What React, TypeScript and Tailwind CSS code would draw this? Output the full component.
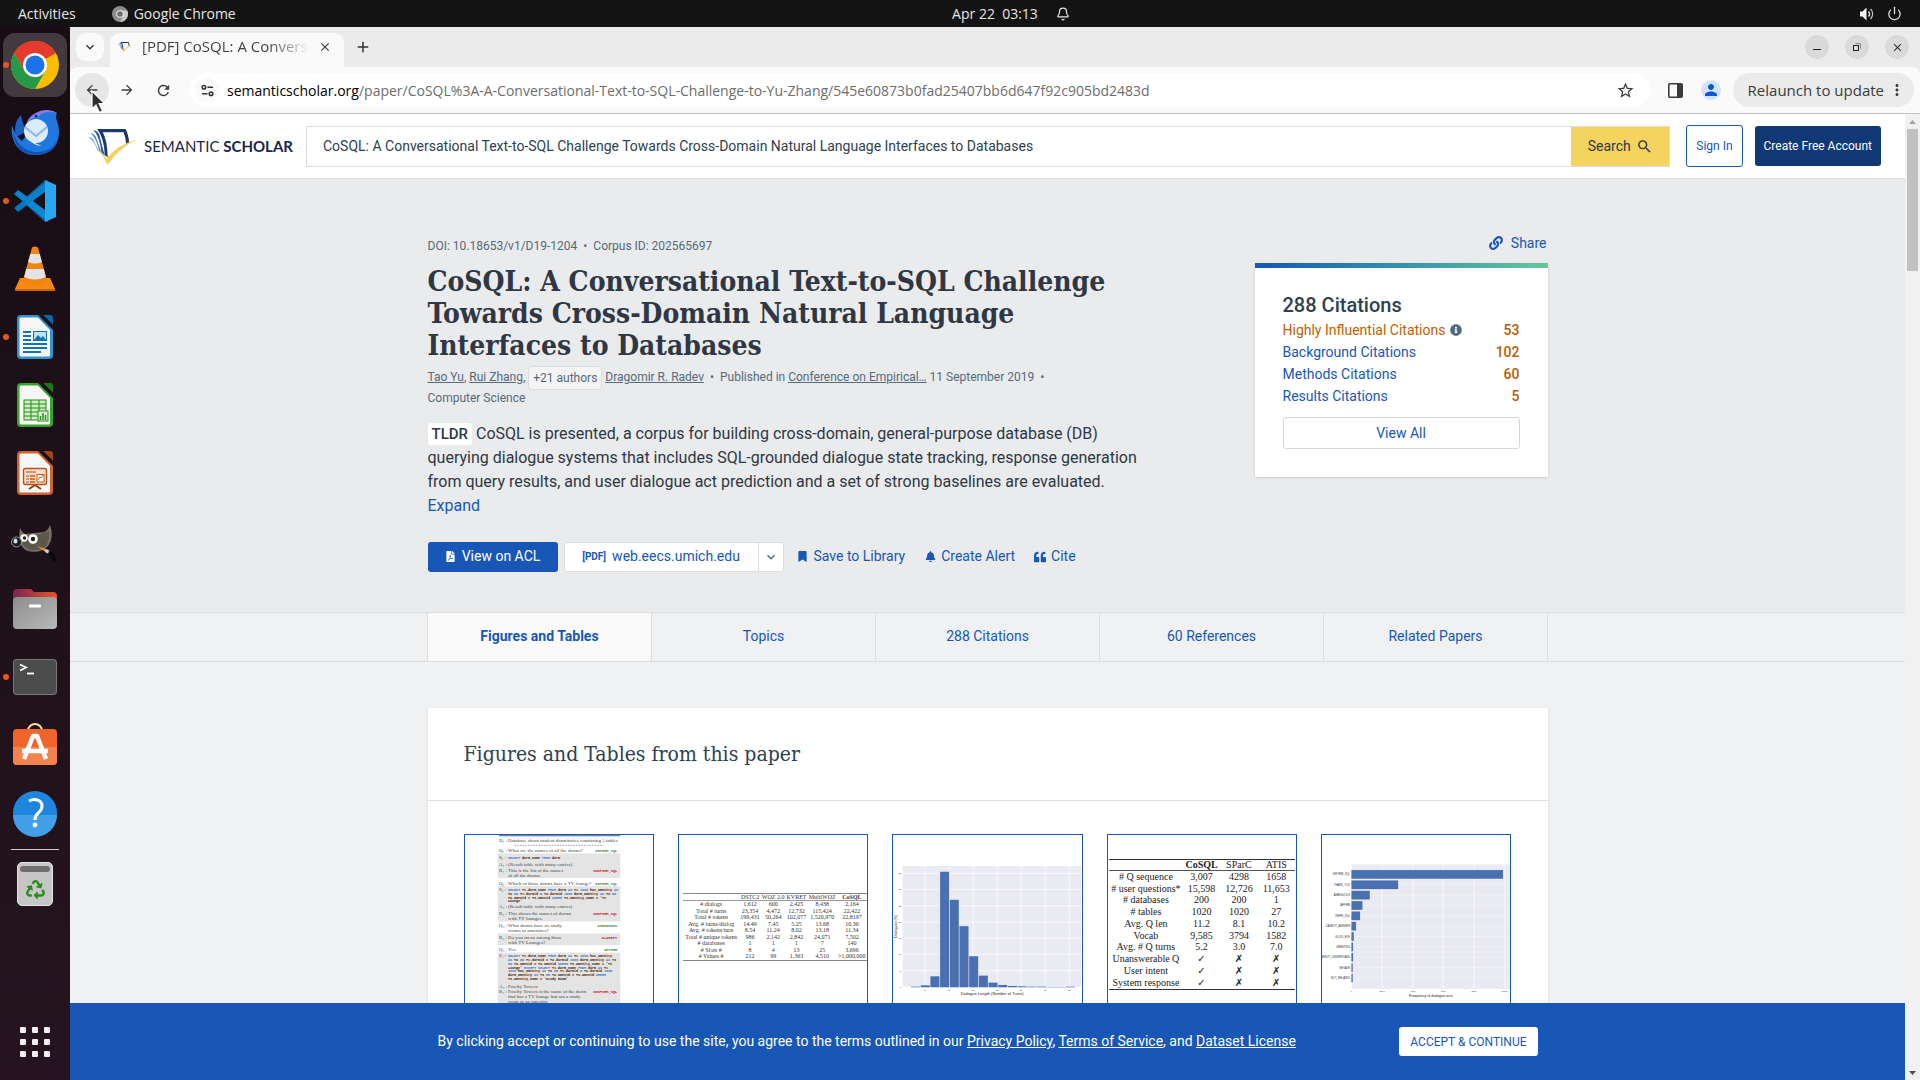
import React from "react";
import { FaBell, FaBookmark, FaFilePdf, FaInfoCircle, FaLink, FaQuoteLeft, FaRecycle } from "react-icons/fa";
import { MdArrowBack, MdArrowForward, MdClose, MdMoreVert, MdPerson, MdRefresh, MdSearch, MdStarBorder, MdAdd, MdExpandMore } from "react-icons/md";
import { Bell, Power } from "lucide-react";

const UI = "font-['Open_Sans','Noto_Sans',sans-serif]";
const ROBOTO = "font-['Roboto',sans-serif]";
const SLAB = "font-['DejaVu_Serif_Condensed','DejaVu_Serif',serif]";

/* ---------- desktop top bar ---------- */

function SpeakerIcon() {
  return (
    <svg viewBox="0 0 16 16" className="size-4" fill="none" stroke="#e8e8e8">
      <path d="M1 5.5h2.5L7.5 1.5v13L3.500 10.500H1z" fill="#f2f2f2" stroke="none" />
      <path d="M9.500 5.500a3.500 3.500 0 0 1 0 5" strokeWidth="1.400" />
      <path d="M11.500 3a7 7 0 0 1 0 10" strokeWidth="1.200" opacity="0.850" />
    </svg>
  );
}

function TopBar() {
  return (
    <header className={`${UI} grid h-[27px] shrink-0 grid-cols-3 items-center bg-[#131313] text-[14px] text-[#e6e6e6]`}>
      <div className="flex items-center gap-9 pl-[18px]">
        <button>Activities</button>
        <button className="flex items-center gap-[6px]">
          <svg viewBox="0 0 16 16" className="size-4">
            <circle cx="8" cy="8" r="8" fill="#8d8d8d" />
            <path d="M8 4.500h7.200A8 8 0 0 1 8 16l3.200-6z" fill="#c9c9c9" />
            <circle cx="8" cy="8" r="3.800" fill="#e9e9e9" />
            <circle cx="8" cy="8" r="2.800" fill="#6d6d6d" />
          </svg>
          Google Chrome
        </button>
      </div>
      <div className="flex items-center justify-center gap-[18px] pl-[102px]">
        <span className="whitespace-pre">Apr 22  03:13</span>
        <Bell className="size-[14px]" strokeWidth={2} />
      </div>
      <div className="flex items-center justify-end gap-3 pr-[18px]">
        <SpeakerIcon />
        <Power className="size-[15px]" strokeWidth={2} />
      </div>
    </header>
  );
}

/* ---------- dock ---------- */

function ChromeIcon() {
  return (
    <svg viewBox="0 0 48 48" className="size-12">
      <circle cx="24" cy="24" r="24" fill="#fbbc04" />
      <path d="M24 24 3.200 12A24 24 0 0 1 44.800 12z" fill="#e33b2e" />
      <path d="M24 12h20.800A24 24 0 0 0 3.200 12L13.600 30z" fill="#e33b2e" />
      <path d="M3.200 12A24 24 0 0 0 24 48l10.400-18L24 36 13.600 30z" fill="#279847" />
      <circle cx="24" cy="24" r="12" fill="#fff" />
      <circle cx="24" cy="24" r="9.500" fill="#1a73e8" />
    </svg>
  );
}

function ThunderbirdIcon() {
  return (
    <svg viewBox="0 0 48 48" className="size-12">
      <path d="M10 6C4 12 3 19 5 28l12-6c-4-4-6-9-7-16z" fill="#1c61c9" />
      <path d="M1 16c-2 15 6 30 23 30 14 0 24-9 24-23 0-8-3-12-3-15 0-2 1-4 1-4-6-3-15-3-21 0-5 2-7 5-9 9l2 3-4 12-3 4C7 29 3 24 1 16z" fill="#1f78e0" />
      <path d="M2 20c2 14 12 23 24 23 10 0 18-5 21-14-1 11-10 17-22 17C10 46 2 36 2 20z" fill="#1453b0" />
      <path d="M25 4c6-4 15-4 21 0-8-2-14-1-18 3-3 1-7 2-12 6 2-4 5-7 9-9z" fill="#9277ea" />
      <circle cx="25" cy="22" r="12" fill="#dcebfb" />
      <path d="M14 18l11 9 11-9" fill="none" stroke="#8bb5e8" strokeWidth="2" />
      <path d="M21 33c3 3 6 4 10 3-5 0-7-2-8-4z" fill="#fff" />
      <circle cx="25" cy="7" r="1.300" fill="#0b2d66" />
    </svg>
  );
}

function CodeIcon() {
  return (
    <svg viewBox="0 0 48 48" className="size-12">
      <path d="M3 17l4-4 30 22v10z" fill="#0a86d1" />
      <path d="M3 31l4 4 30-22V3z" fill="#0672b8" />
      <path d="M34 3l11 5v32l-11 5z" fill="#27a9f2" />
      <path d="M34 3v12L22 24l12 9v12L14 27V21z" fill="#0e8ad8" opacity="0.600" />
      <path d="M34 15v18L22 24z" fill="#1a1018" />
    </svg>
  );
}

function VlcIcon() {
  return (
    <svg viewBox="0 0 48 48" className="size-12">
      <path d="M9 33h30l5 11H4z" fill="#f58a12" />
      <path d="M4 44h40v2H4z" fill="#c96400" />
      <path d="M21 2.500q3-2 6 0l9.500 35q-12.500 6-25 0z" fill="#f28411" />
      <path d="M19.300 9h9.400l2.200 8q-7 3-13.800 0z" fill="#e4e4e4" />
      <path d="M15.200 24h17.600l2 8q-11 5-21.600 0z" fill="#e4e4e4" />
    </svg>
  );
}

function OfficeIcon({ dark, light, children }: { dark: string; light: string; children: React.ReactNode }) {
  return (
    <svg viewBox="0 0 48 48" className="size-12">
      <path d="M10 2h18l14 14v26a4 4 0 0 1-4 4H10a4 4 0 0 1-4-4V6a4 4 0 0 1 4-4z" fill={light} />
      <path d="M10 4.500h17L39 17v25a1.500 1.500 0 0 1-1.500 1.500h-27A1.500 1.500 0 0 1 8.500 42V6A1.500 1.500 0 0 1 10 4.500z" fill="#f7f7f7" />
      <path d="M32 2h7a3 3 0 0 1 3 3v7z" fill={dark} />
      <path d="M27 2l15 15v-5L32 2z" fill="#1a1018" />
      {children}
    </svg>
  );
}

function WriterIcon() {
  return (
    <OfficeIcon dark="#0b6aa5" light="#3294cc">
      <path d="M12 19h8M12 23h8M12 27h8M12 31h24M12 35h24M12 39h18" stroke="#0f72b4" strokeWidth="1.800" />
      <rect x="22.500" y="18.500" width="13" height="9" fill="#bfe1f6" stroke="#0f72b4" />
      <path d="M23 27l4-5 3 3 2-2 3 4z" fill="#0f72b4" />
    </OfficeIcon>
  );
}

function CalcIcon() {
  return (
    <OfficeIcon dark="#1c7a10" light="#35a62a">
      <rect x="13" y="19" width="22" height="20" fill="#c9f0bf" stroke="#2a8c1c" />
      <path d="M13 23h22M13 27h22M13 31h22M13 35h22M20 19v20M28 19v20" stroke="#2a8c1c" />
      <rect x="27" y="30" width="10" height="10" fill="#d8f5d0" stroke="#2a8c1c" />
      <path d="M29.500 39v-4M32 39v-7M34.500 39v-5" stroke="#2a8c1c" strokeWidth="1.500" />
    </OfficeIcon>
  );
}

function ImpressIcon() {
  return (
    <OfficeIcon dark="#a5480f" light="#cf6430">
      <path d="M18 40l6-4 6 4" fill="none" stroke="#8a3c10" strokeWidth="1.800" />
      <rect x="12.500" y="19.500" width="23" height="16" rx="2" fill="#f7dccb" stroke="#b4531b" strokeWidth="1.400" />
      <path d="M15 23h10M15 27h3M15 30h3M15 33h3" stroke="#b4531b" />
      <path d="M19 27h5M19 30h5M19 33h5" stroke="#d9763b" strokeWidth="1.800" />
      <rect x="26" y="25.500" width="7" height="7.500" fill="#fff" stroke="#c05a20" />
      <path d="M27 31l2-3 1 1 2-3" fill="none" stroke="#c05a20" />
    </OfficeIcon>
  );
}

function GimpIcon() {
  return (
    <svg viewBox="0 0 48 48" className="size-12">
      <path d="M9 11c1 2 3 5 5 6 6-1 14-1 19-2 3-1 5-4 6-7 3 8 2 16-2 21-4 5-13 7-20 5C9 31 7 23 9 11z" fill="#777163" />
      <path d="M11 20c8-2 20-2 27-6 0 6 0 10-3 15-6 6-20 6-23-2z" fill="#5c574b" />
      <circle cx="22" cy="22" r="4.800" fill="#fff" />
      <circle cx="13" cy="21" r="3.800" fill="#fff" />
      <circle cx="22" cy="22" r="2.200" fill="#222" />
      <circle cx="13.500" cy="21" r="1.700" fill="#222" />
      <ellipse cx="5.500" cy="25" rx="5" ry="5" fill="#1c1c1c" stroke="#8c98a3" />
      <ellipse cx="4.500" cy="24" rx="2" ry="2.500" fill="#cfe0ee" />
      <path d="M26 29l11 4-1 3z" fill="#f29b2e" />
      <path d="M35 32l4 2-1 3-4-2z" fill="#c9d2d8" />
      <path d="M38 34c5 1 7 5 8 11-4-1-7-4-9-8z" fill="#0a0a0a" />
    </svg>
  );
}

function FilesIcon() {
  return (
    <svg viewBox="0 0 48 48" className="size-12">
      <defs>
        <linearGradient id="files-tab"><stop offset="0" stopColor="#7b2456" /><stop offset="1" stopColor="#e95420" /></linearGradient>
        <linearGradient id="files-body" x1="0" x2="1" y1="0" y2="1"><stop offset="0" stopColor="#8d8d8d" /><stop offset="1" stopColor="#b9b9b9" /></linearGradient>
      </defs>
      <path d="M2 8a4 4 0 0 1 4-4h14l3 3h19a4 4 0 0 1 4 4v10H2z" fill="url(#files-tab)" />
      <rect x="2" y="12" width="44" height="32" rx="4" fill="url(#files-body)" />
      <rect x="18" y="19.500" width="12" height="3" rx="1" fill="#fff" />
    </svg>
  );
}

function TerminalIcon() {
  return (
    <svg viewBox="0 0 48 48" className="size-12">
      <rect x="2" y="6" width="44" height="36" rx="4" fill="#777" />
      <rect x="3" y="7" width="42" height="34" rx="3" fill="#4c4c4c" />
      <path d="M9 11.500l6 3-6 3" fill="none" stroke="#fff" strokeWidth="1.800" />
      <path d="M16 20.500h7" stroke="#fff" strokeWidth="1.800" />
    </svg>
  );
}

function SoftwareIcon() {
  return (
    <svg viewBox="0 0 48 48" className="size-12">
      <path d="M17 10a7 7 0 0 1 14 0" fill="none" stroke="#fbd9a8" strokeWidth="2" />
      <rect x="2" y="8" width="44" height="36" rx="4" fill="#f0652b" />
      <path d="M2 26h44v14a4 4 0 0 1-4 4H6a4 4 0 0 1-4-4z" fill="#f4824f" />
      <path d="M13 38l9-23h4l9 23M11 30h26" fill="none" stroke="#fff" strokeWidth="4.500" strokeLinejoin="round" />
    </svg>
  );
}

function HelpIcon() {
  return (
    <svg viewBox="0 0 48 48" className="size-12">
      <circle cx="24" cy="24" r="22" fill="#1f86dd" />
      <path d="M2 26a22 22 0 0 0 44 0z" fill="#41a0e8" />
      <path d="M18 12c6-3 13-1 13 5 0 7-7 6-7 14" fill="none" stroke="#fff" strokeWidth="3" />
      <circle cx="24" cy="36" r="2.400" fill="#fff" />
    </svg>
  );
}

function TrashIcon() {
  return (
    <span className="flex h-11 w-9 flex-col items-center gap-2 rounded-[5px] border border-[#e6e6e6] bg-[#c6c6c6] pt-[3px]">
      <span className="h-[6px] w-[30px] rounded-[3px] bg-[#6e6e6e]" />
      <FaRecycle className="size-[19px] text-[#2a8a1e]" />
    </span>
  );
}

const dockItems = [
  { name: "Google Chrome", icon: <ChromeIcon />, running: true, active: true },
  { name: "Thunderbird Mail", icon: <ThunderbirdIcon /> },
  { name: "Visual Studio Code", icon: <CodeIcon />, running: true },
  { name: "VLC media player", icon: <VlcIcon /> },
  { name: "LibreOffice Writer", icon: <WriterIcon />, running: true },
  { name: "LibreOffice Calc", icon: <CalcIcon /> },
  { name: "LibreOffice Impress", icon: <ImpressIcon /> },
  { name: "GIMP", icon: <GimpIcon /> },
  { name: "Files", icon: <FilesIcon /> },
  { name: "Terminal", icon: <TerminalIcon />, running: true },
  { name: "Software", icon: <SoftwareIcon /> },
  { name: "Help", icon: <HelpIcon /> },
];

function Dock() {
  return (
    <nav aria-label="Dock" className="flex w-[70px] shrink-0 flex-col bg-gradient-to-b from-[#180d14] to-[#25141f] pt-[6px]">
      {dockItems.map((item) => (
        <button
          key={item.name}
          aria-label={item.name}
          className={`relative mx-[3px] mb-1 flex h-16 items-center justify-center rounded-xl ${item.active ? "bg-[#433a40]" : ""}`}
        >
          {item.icon}
          {item.running && <span className="absolute left-0 size-[6px] rounded-full bg-[#e95420]" />}
        </button>
      ))}
      <div className="mx-[11px] mb-3 h-px bg-[#d0cccf]" />
      <button aria-label="Trash" className="flex justify-center">
        <TrashIcon />
      </button>
      <button aria-label="Show Applications" className="mx-auto mt-auto mb-[23px] grid grid-cols-3 gap-[6px]">
        {Array.from({ length: 9 }, (_, i) => (
          <span key={i} className="size-[6px] rounded-[1px] bg-[#f2f0f1]" />
        ))}
      </button>
    </nav>
  );
}

/* ---------- browser window ---------- */

function ScholarMark({ className }: { className: string }) {
  return (
    <svg viewBox="48 294 150 112" className={className}>
      <path d="M48 321q9 0 14 6l20 39q-4-2-7-7-8-25-27-38z" fill="#7fa0d6" />
      <path d="M55 309q9 1 15 9l20 55q-5-3-9-9-6-35-26-55z" fill="#5d87cc" />
      <path d="M64 300q11 2 17 13l17 65q-6-4-10-10-4-45-24-68z" fill="#2c5aa8" />
      <path d="M75 297h86q9 16 11 42l-9 4q-2-22-8-36H92q14 25 15 76l-9-7q-1-50-23-79z" fill="#1b3a6b" />
      <path d="M72 353q13 9 31 33 36-43 94-58-54 25-91 78-12-29-34-53z" fill="#f5d161" />
    </svg>
  );
}

function WindowButton({ label, children }: { label: string; children: React.ReactNode }) {
  return (
    <button aria-label={label} className="flex size-6 items-center justify-center rounded-full bg-[#dadada] text-[#333]">
      {children}
    </button>
  );
}

function TabStrip() {
  return (
    <div className="flex h-10 shrink-0 items-end bg-[#ebebeb] pl-[6px]">
      <button aria-label="Search tabs" className="mb-[6px] flex size-7 items-center justify-center rounded-[10px] bg-[#fafafa] text-[#333]">
        <MdExpandMore className="size-4" />
      </button>
      <div className="ml-[6px] flex h-[34px] w-[234px] items-center rounded-t-[10px] bg-[#fafafa] pr-2 pb-[6px] pl-2 text-[#3c3c3c]">
        <ScholarMark className="h-3 w-[14px] shrink-0" />
        <span className="ml-[10px] h-6 flex-1 overflow-hidden bg-gradient-to-r from-[#3c3c3c] from-75% to-transparent bg-clip-text text-[15px] leading-[22px] whitespace-nowrap text-transparent">
          [PDF] CoSQL: A Conversational
        </span>
        <button aria-label="Close tab" className="ml-1 p-1"><MdClose className="size-[14px]" /></button>
      </div>
      <button aria-label="New tab" className="mb-[11px] ml-[10px] text-[#333]"><MdAdd className="size-[18px]" /></button>
      <div className="mr-[11px] mb-2 ml-auto flex gap-4">
        <WindowButton label="Minimize"><span className="mt-[5px] h-px w-2 bg-[#222]" /></WindowButton>
        <WindowButton label="Restore">
          <svg viewBox="0 0 8 8" className="size-2" fill="none">
            <path d="M2.500.5h5v5" stroke="#888" />
            <rect x="0.500" y="2.500" width="5" height="5" stroke="#222" />
          </svg>
        </WindowButton>
        <WindowButton label="Close"><MdClose className="size-[13px]" /></WindowButton>
      </div>
    </div>
  );
}

function Toolbar() {
  return (
    <div className="flex h-[47px] shrink-0 items-center rounded-t-lg border-b border-[#c4c4c4] bg-[#fafafa] pr-[6px] pl-[5px] text-[#3c3c3c]">
      <div className="relative">
        <button aria-label="Back" className="flex size-[34px] items-center justify-center rounded-full bg-[#e6e6e6]">
          <MdArrowBack className="size-4" />
        </button>
        <svg viewBox="0 0 14 24" className="absolute top-[17px] left-4 z-10 h-6 w-[14px]">
          <path d="M1 1v18l4-4 3.500 7.500 3-1.500L8 13.500h5.500z" fill="#2d2d2d" stroke="#fff" strokeWidth="1.200" />
        </svg>
      </div>
      <button aria-label="Forward" className="ml-[6px] p-1"><MdArrowForward className="size-4" /></button>
      <button aria-label="Reload" className="ml-3 p-1"><MdRefresh className="size-[17px]" /></button>
      <div className="ml-[14px] flex h-[34px] flex-1 items-center rounded-full bg-white pr-[15px] pl-1">
        <button aria-label="View site information" className="flex size-[26px] items-center justify-center rounded-full bg-[#fafafa]">
          <svg viewBox="0 0 14 14" className="size-[13px]" fill="none" stroke="#333" strokeWidth="1.700">
            <circle cx="3.200" cy="3.500" r="1.900" />
            <path d="M7 3.500h6M1 10.500h6" />
            <circle cx="10.800" cy="10.500" r="1.900" />
          </svg>
        </button>
        <div className="ml-[7px] flex-1 overflow-hidden text-[14px] whitespace-nowrap text-[#6d6d6d]">
          <span className="text-black">semanticscholar.org</span>/paper/CoSQL%3A-A-Conversational-Text-to-SQL-Challenge-to-Yu-Zhang/545e60873b0fad25407bb6d647f92c905bd2483d
        </div>
        <button aria-label="Bookmark this tab"><MdStarBorder className="size-[19px]" /></button>
      </div>
      <button aria-label="Side panel" className="ml-[18px]">
        <svg viewBox="0 0 15 15" className="size-[15px]">
          <rect x="0.800" y="0.800" width="13.400" height="13.400" rx="1" fill="none" stroke="#3c3c3c" strokeWidth="1.600" />
          <path d="M9 1h5v13H9z" fill="#3c3c3c" />
        </svg>
      </button>
      <button aria-label="Profile" className="ml-[18px] flex size-5 items-center justify-center rounded-full bg-[#d3e3fd] text-[#0b57d0]">
        <MdPerson className="size-[18px]" />
      </button>
      <button className="ml-3 flex h-[34px] items-center rounded-full bg-[#ebebeb] pr-2 pl-[15px] text-[15px]">
        Relaunch to update
        <MdMoreVert className="ml-1 size-[18px]" />
      </button>
    </div>
  );
}

/* ---------- page header ---------- */

function PageHeader() {
  return (
    <header className="flex h-[65px] shrink-0 items-center border-b border-[#dcdddf] bg-white pr-6 pl-[18px]">
      <a href="#" className="flex w-[218px] items-center gap-[6px] font-['Lato',sans-serif] text-[15px] text-[#17264a]">
        <ScholarMark className="h-[37px] w-[50px]" />
        <span>SEMANTIC <b className="font-bold">SCHOLAR</b></span>
      </a>
      <form className="flex h-[41px] flex-1 border border-[#dcdddf]">
        <input
          aria-label="Search"
          defaultValue="CoSQL: A Conversational Text-to-SQL Challenge Towards Cross-Domain Natural Language Interfaces to Databases"
          className="min-w-0 flex-1 px-4 text-[14px] text-[#2e414f]"
        />
        <button type="button" className="flex w-[98px] items-center justify-center gap-[5px] bg-[#f4d35e] text-[14px] text-[#2e3743]">
          Search <MdSearch className="size-[17px]" />
        </button>
      </form>
      <button className="ml-4 h-[42px] rounded-[3px] border border-[#1857b6] px-[9px] text-xs text-[#1857b6]">Sign In</button>
      <button className="ml-3 h-10 rounded-[3px] bg-[#0f3875] px-[9px] text-xs text-white">Create Free Account</button>
    </header>
  );
}

/* ---------- paper summary ---------- */

const citations = [
  { label: "Highly Influential Citations", count: 53, influential: true },
  { label: "Background Citations", count: 102 },
  { label: "Methods Citations", count: 60 },
  { label: "Results Citations", count: 5 },
];

function CitationCard() {
  return (
    <section className="bg-white shadow-sm">
      <div className="h-[5px] bg-gradient-to-r from-[#1857b6] to-[#64c898]" />
      <div className="px-7 pt-[25px] pb-7">
        <h2 className="mb-[2px] text-xl leading-6 font-medium text-[#2e414f]">288 Citations</h2>
        <ul>
          {citations.map((c) => (
            <li key={c.label} className="flex items-center text-[14px] leading-[22px]">
              <a href="#" className={c.influential ? "text-[#c15f00]" : "text-[#1857b6]"}>{c.label}</a>
              {c.influential && <FaInfoCircle className="ml-[5px] size-3 text-[#546a7b]" />}
              <span className="ml-auto font-medium text-[#b85c00]">{c.count}</span>
            </li>
          ))}
        </ul>
        <button className="mt-[10px] h-8 w-full rounded-[3px] border border-[#d5d7da] text-[14px] text-[#1857b6]">View All</button>
      </div>
    </section>
  );
}

function Hero() {
  return (
    <section className="bg-[#eaebed]">
      <div className="mx-auto flex max-w-[1120px] justify-between pb-10">
        <div className="w-[720px] pt-[59px]">
          <p className="text-xs leading-4 text-[#546a7b]">
            DOI: 10.18653/v1/D19-1204<span className="mx-[6px]">•</span>Corpus ID: 202565697
          </p>
          <h1 className={`${SLAB} mt-3 text-[28px] leading-8 font-bold text-[#2e3743]`}>
            CoSQL: A Conversational Text-to-SQL Challenge Towards Cross-Domain Natural Language Interfaces to Databases
          </h1>
          <div className="mt-[5px] text-xs leading-5 text-[#546a7b]">
            <a href="#" className="underline">Tao Yu</a>, <a href="#" className="underline">Rui Zhang</a>,{" "}
            <button className="-my-[2px] inline-block h-6 rounded-[3px] border border-[#dcdddf] bg-[#f4f4f4] px-1 align-middle">+21 authors</button>{" "}
            <a href="#" className="underline">Dragomir R. Radev</a><span className="mx-[6px]">•</span>Published in{" "}
            <a href="#" className="underline">Conference on Empirical…</a> 11 September 2019<span className="mx-[6px]">•</span>
            <div>Computer Science</div>
          </div>
          <p className="mt-[14px] text-base leading-6 text-[#2e3743]">
            <span className="mr-1 rounded-[3px] bg-white px-1 py-[2px] text-[15px] font-medium">TLDR</span>
            CoSQL is presented, a corpus for building cross-domain, general-purpose database (DB) querying dialogue systems
            that includes SQL-grounded dialogue state tracking, response generation from query results, and user dialogue
            act prediction and a set of strong baselines are evaluated.{" "}
            <button className="text-[#1857b6]">Expand</button>
          </p>
          <div className="mt-6 flex items-center text-[14px] text-[#1857b6]">
            <a href="#" className="flex h-[30px] w-[130px] items-center justify-center gap-[6px] rounded-[3px] bg-[#1857b6] text-white">
              <FaFilePdf className="size-[11px]" /> View on ACL
            </a>
            <a href="#" className="ml-[6px] flex h-[30px] w-[195px] items-center justify-center gap-[6px] rounded-l-[3px] border border-[#dcdddf] bg-white">
              <span className="text-[10px] font-bold">[PDF]</span> web.eecs.umich.edu
            </a>
            <button aria-label="More sources" className="-ml-px flex h-[30px] w-[26px] items-center justify-center rounded-r-[3px] border border-[#dcdddf] bg-white text-[#546a7b]">
              <MdExpandMore className="size-4" />
            </button>
            <button className="ml-[13px] flex items-center gap-[6px]"><FaBookmark className="size-[11px]" /> Save to Library</button>
            <button className="ml-5 flex items-center gap-[5px]"><FaBell className="size-[11px]" /> Create Alert</button>
            <button className="ml-[19px] flex items-center gap-[5px]"><FaQuoteLeft className="size-[12px]" /> Cite</button>
          </div>
        </div>
        <aside className="w-[293px] pt-[54px]">
          <button className="mr-px mb-[10px] ml-auto flex h-5 items-center gap-2 text-[14px] text-[#1857b6]">
            <FaLink className="size-[14px]" /> Share
          </button>
          <CitationCard />
        </aside>
      </div>
    </section>
  );
}

const sections = ["Figures and Tables", "Topics", "288 Citations", "60 References", "Related Papers"];

function SectionTabs() {
  return (
    <nav className="border-y border-[#dcdddf]">
      <div className="mx-auto grid h-12 max-w-[1121px] grid-cols-5 border-l border-[#dcdddf]">
        {sections.map((s, i) => (
          <a
            key={s}
            href="#"
            className={`flex items-center justify-center border-r border-[#dcdddf] text-[14px] text-[#1857b6] ${i === 0 ? "bg-[#fafafa] font-bold" : ""}`}
          >
            {s}
          </a>
        ))}
      </div>
    </nav>
  );
}

/* ---------- figure thumbnails ---------- */

type Span = [string, string?];
const K = "#1e82c8";
const dialogue: { y: number; label?: string; body?: string; tag?: string; tone?: string; code?: Span[] }[] = [
  { y: 22, label: "D₁ :", body: "Database about student dormitories containing 5 tables" },
  { y: 52, label: "Q₁ :", body: "What are the names of all the dorms?", tag: "INFORM_SQL", tone: "#4a8a3a" },
  { y: 72, label: "S₁ :", code: [["SELECT ", K], ["dorm_name "], ["FROM ", K], ["dorm"]] },
  { y: 93, label: "A₁ :", body: "(Result table with many entries)" },
  { y: 112, label: "R₁ :", body: "This is the list of the names", tag: "CONFIRM_SQL", tone: "#c8202c" },
  { y: 126, body: "of all the dorms." },
  { y: 149, label: "Q₂ :", body: "Which of those dorms have a TV lounge?", tag: "INFORM_SQL", tone: "#4a8a3a" },
  { y: 168, label: "S₂ :", code: [["SELECT ", K], ["T1.dorm_name "], ["FROM ", K], ["dorm "], ["AS ", K], ["T1 "], ["JOIN ", K], ["has_amenity "], ["AS", K]] },
  { y: 179, code: [["T2 "], ["ON ", K], ["T1.dormid = T2.dormid "], ["JOIN ", K], ["dorm_amenity "], ["AS ", K], ["T3 "], ["ON", K]] },
  { y: 191, code: [["T2.amenid = T3.amenid "], ["WHERE ", K], ["T3.amenity_name = 'TV"]] },
  { y: 202, code: [["Lounge'"]] },
  { y: 220, label: "A₂ :", body: "(Result table with many entries)" },
  { y: 239, label: "R₂ :", body: "This shows the names of dorms", tag: "CONFIRM_SQL", tone: "#c8202c" },
  { y: 253, body: "with TV lounges." },
  { y: 276, label: "Q₃ :", body: "What dorms have no study", tag: "AMBIGUOUS", tone: "#4a8a3a" },
  { y: 291, body: "rooms as amenities?" },
  { y: 312, label: "R₃ :", body: "Do you mean among those", tag: "CLARIFY", tone: "#c8202c" },
  { y: 326, body: "with TV Lounges?" },
  { y: 346, label: "Q₄ :", body: "Yes.", tag: "AFFIRM", tone: "#4a8a3a" },
  { y: 366, label: "S₄ :", code: [["SELECT ", K], ["T1.dorm_name "], ["FROM ", K], ["dorm "], ["AS ", K], ["T1 "], ["JOIN ", K], ["has_amenity"]] },
  { y: 377, code: [["AS ", K], ["T2 "], ["ON ", K], ["T1.dormid = T2.dormid "], ["JOIN ", K], ["dorm_amenity "], ["AS ", K], ["T3"]] },
  { y: 388, code: [["ON ", K], ["T2.amenid = T3.amenid "], ["WHERE ", K], ["T3.amenity_name = 'TV"]] },
  { y: 400, code: [["Lounge' "], ["EXCEPT SELECT ", K], ["T1.dorm_name "], ["FROM ", K], ["dorm "], ["AS ", K], ["T1"]] },
  { y: 411, code: [["JOIN ", K], ["has_amenity "], ["AS ", K], ["T2 "], ["ON ", K], ["T1.dormid = T2.dormid "], ["JOIN", K]] },
  { y: 422, code: [["dorm_amenity "], ["AS ", K], ["T3 "], ["ON ", K], ["T2.amenid = T3.amenid "], ["WHERE", K]] },
  { y: 433, code: [["T3.amenity_name = 'Study Room'"]] },
  { y: 459, label: "A₄ :", body: "Fawlty Towers" },
  { y: 473, label: "R₄ :", body: "Fawlty Towers is the name of the dorm", tag: "CONFIRM_SQL", tone: "#c8202c" },
  { y: 489, body: "that has a TV lounge but not a study" },
  { y: 503, body: "room as an amenity." },
];

function DialogueFigure() {
  const bands = [[55, 74], [153, 106], [295, 35], [352, 160]];
  return (
    <svg viewBox="0 0 564 510" className="w-full">
      <path d="M102 2h363" stroke="#4b5a85" strokeWidth="3" />
      {bands.map(([y, h]) => <rect key={y} x="98" y={y} width="367" height={h} fill="#e4e4e4" />)}
      <path d="M148 31h266" stroke="#777" strokeWidth="2" strokeDasharray="5 3" />
      {dialogue.map((l) => (
        <g key={l.y} fontSize="15" className="font-['Liberation_Serif',serif]" fill="#444">
          {l.label && <text x="102" y={l.y}>{l.label}</text>}
          {l.body && <text x="129" y={l.y}>{l.body}</text>}
          {l.code && (
            <text x="129" y={l.y} fontSize="10" fontWeight="700" className="font-['Liberation_Mono',monospace]" xmlSpace="preserve">
              {l.code.map(([t, c], i) => <tspan key={i} fill={c ?? "#222"}>{t}</tspan>)}
            </text>
          )}
          {l.tag && <text x="456" y={l.y} textAnchor="end" fontSize="11" fontWeight="700" fill={l.tone} className="font-['Liberation_Mono',monospace]">{l.tag}</text>}
        </g>
      ))}
    </svg>
  );
}

const corpusRows = [
  ["# dialogs", "1,612", "600", "2,425", "8,438", "2,164"],
  ["Total # turns", "23,354", "4,472", "12,732", "115,424", "22,422"],
  ["Total # tokens", "199,431", "50,264", "102,077", "1,520,970", "22,8197"],
  ["Avg. # turns/dialog", "14.49", "7.45", "5.25", "13.68", "10.36"],
  ["Avg. # tokens/turn", "8.54", "11.24", "8.02", "13.18", "11.34"],
  ["Total # unique tokens", "986", "2,142", "2,842", "24,071", "7,502"],
  ["# databases", "1", "1", "1", "7", "140"],
  ["# Slots #", "8", "4", "13", "25", "3,696"],
  ["# Values #", "212", "99", "1,363", "4,510", ">1,000,000"],
];

function CorpusTable() {
  return (
    <table className="mt-[58px] ml-1 h-[68px] w-[184px] border-collapse border-y border-[#888] text-center font-['Liberation_Serif',serif] text-[6px] leading-[6px] whitespace-nowrap text-[#333]">
      <thead>
        <tr className="border-b border-[#999]">
          {["", "DSTC2", "WOZ 2.0", "KVRET", "MultiWOZ", "CoSQL"].map((h) => (
            <th key={h} className={h === "CoSQL" ? "p-0 font-bold" : "p-0 font-normal"}>{h}</th>
          ))}
        </tr>
      </thead>
      <tbody>
        {corpusRows.map((r) => (
          <tr key={r[0]}>{r.map((c, i) => <td key={i} className="p-0">{c}</td>)}</tr>
        ))}
      </tbody>
    </table>
  );
}

function TurnsHistogram() {
  const tops = [454, 450, 423, 110, 194, 273, 363, 421, 442, 449, 452, 453, 454, 454, 455, 455, 454];
  return (
    <svg viewBox="0 0 564 510" className="w-full font-['Liberation_Sans',sans-serif]">
      <rect x="29" y="93" width="535" height="362" fill="#eaeaf2" />
      {[95, 168, 240, 312, 383, 456, 528].map((x, i) => (
        <g key={x}>
          <path d={`M${x} 93v362`} stroke="#fff" strokeWidth="2" />
          <text x={x} y="467" fontSize="7" textAnchor="middle" fill="#333">{(i + 1) * 5}</text>
        </g>
      ))}
      {[455, 406, 357, 309, 261, 212, 163, 115].map((y, i) => (
        <g key={y}>
          <path d={`M29 ${y}h535`} stroke="#fff" strokeWidth="2" />
          <text x="24" y={y + 3} fontSize="7" textAnchor="end" fill="#333">{i * 5}</text>
        </g>
      ))}
      {tops.map((y, i) => <rect key={i} x={54 + i * 29} y={y} width="27" height={456 - y} fill="#4a70b0" />)}
      <text x="297" y="479" fontSize="12" textAnchor="middle" fill="#222">Dialogue Length (Number of Turns)</text>
      <text transform="translate(11 273) rotate(-90)" fontSize="11" textAnchor="middle" fill="#222">Dialogues (%)</text>
    </svg>
  );
}

const comparisonRows = [
  ["# Q sequence", "3,007", "4298", "1658"],
  ["# user questions*", "15,598", "12,726", "11,653"],
  ["# databases", "200", "200", "1"],
  ["# tables", "1020", "1020", "27"],
  ["Avg. Q len", "11.2", "8.1", "10.2"],
  ["Vocab", "9,585", "3794", "1582"],
  ["Avg. # Q turns", "5.2", "3.0", "7.0"],
  ["Unanswerable Q", "✓", "✗", "✗"],
  ["User intent", "✓", "✗", "✗"],
  ["System response", "✓", "✗", "✗"],
];

function ComparisonTable() {
  return (
    <table className="mx-auto mt-6 h-[131px] w-[186px] table-fixed border-collapse border-y border-[#333] text-center font-['Liberation_Serif','DejaVu_Sans',serif] text-[10px] leading-[10px] whitespace-nowrap text-[#222]">
      <thead>
        <tr className="border-b border-[#555]">
          <th className="w-[74px] p-0"></th>
          <th className="p-0 font-bold">CoSQL</th>
          <th className="p-0 font-normal">SParC</th>
          <th className="p-0 font-normal">ATIS</th>
        </tr>
      </thead>
      <tbody>
        {comparisonRows.map((r) => (
          <tr key={r[0]}>{r.map((c, i) => <td key={i} className="p-0">{c}</td>)}</tr>
        ))}
      </tbody>
    </table>
  );
}

const acts: [string, number][] = [
  ["INFORM_SQL", 454], ["THANK_YOU", 140], ["AMBIGUOUS", 55], ["AFFIRM", 33], ["INFER_SQL", 26], ["CANNOT_ANSWER", 14],
  ["GOOD_BYE", 7], ["GREETING", 5], ["CANNOT_UNDERSTAND", 5], ["NEGATE", 4], ["NOT_RELATED", 4],
];

function ActsChart() {
  return (
    <svg viewBox="0 0 564 510" className="w-full font-['Liberation_Sans',sans-serif]">
      <rect x="88" y="88" width="476" height="373" fill="#eaeaf2" />
      {[88, 180, 272, 363, 455, 547].map((x, i) => (
        <g key={x}>
          <path d={`M${x} 88v373`} stroke="#fff" strokeWidth="2" />
          <text x={x} y="471" fontSize="7" textAnchor="middle" fill="#333">{i * 2000}</text>
        </g>
      ))}
      {acts.map(([name, w], i) => (
        <g key={name}>
          <path d={`M88 ${118 + i * 31}h476`} stroke="#fff" strokeWidth="1" />
          <rect x="88" y={105 + i * 31} width={w} height="26" fill="#4a70b0" />
          <text x="84" y={121 + i * 31} fontSize="8" textAnchor="end" fill="#333">{name}</text>
        </g>
      ))}
      <text x="326" y="484" fontSize="11" textAnchor="middle" fill="#222">Frequency of dialogue acts</text>
    </svg>
  );
}

function FiguresCard() {
  const figures = [<DialogueFigure />, <CorpusTable />, <TurnsHistogram />, <ComparisonTable />, <ActsChart />];
  return (
    <section className="mx-auto mt-[46px] max-w-[1120px] bg-white shadow-sm">
      <h2 className={`${SLAB} border-b border-[#dcdddf] px-9 py-8 text-[21px] leading-7 text-[#2e414f]`}>
        Figures and Tables from this paper
      </h2>
      <div className="grid grid-cols-5 gap-6 px-9 py-[33px]">
        {figures.map((figure, i) => (
          <a key={i} href="#" aria-label={`Figure ${i + 1}`} className="block h-[190px] overflow-hidden border border-[#1857b6]">
            {figure}
          </a>
        ))}
      </div>
    </section>
  );
}

function CookieBar() {
  return (
    <div className="shrink-0 bg-[#1857b6] text-white">
      <div className="mx-auto flex h-[77px] max-w-[1100px] items-center justify-between text-[14px]">
        <p>
          By clicking accept or continuing to use the site, you agree to the terms outlined in our{" "}
          <a href="#" className="underline">Privacy Policy</a>, <a href="#" className="underline">Terms of Service</a>, and{" "}
          <a href="#" className="underline">Dataset License</a>
        </p>
        <button className="h-[29px] rounded-[3px] bg-white px-[11px] text-xs text-[#1857b6]">ACCEPT &amp; CONTINUE</button>
      </div>
    </div>
  );
}

function ScrollBar() {
  return (
    <div className="flex w-[15px] shrink-0 flex-col items-center bg-[#f1f1f1]">
      <svg viewBox="0 0 15 15" className="size-[15px]"><path d="M4 10h7L7.500 6z" fill="#a3a3a3" /></svg>
      <div className="h-[142px] w-[11px] bg-[#c1c1c1]" />
      <svg viewBox="0 0 15 15" className="mt-auto size-[15px]"><path d="M4 6h7l-3.500 4z" fill="#505050" /></svg>
    </div>
  );
}

export default function App() {
  return (
    <div className="flex h-screen flex-col overflow-hidden">
      <TopBar />
      <div className="flex min-h-0 flex-1">
        <Dock />
        <div className={`${UI} flex min-w-0 flex-1 flex-col bg-[#ebebeb]`}>
          <TabStrip />
          <Toolbar />
          <div className={`${ROBOTO} flex min-h-0 flex-1`}>
            <div className="flex min-w-0 flex-1 flex-col bg-[#eff1f3]">
              <PageHeader />
              <main className="min-h-0 flex-1 overflow-hidden">
                <Hero />
                <SectionTabs />
                <FiguresCard />
              </main>
              <CookieBar />
            </div>
            <ScrollBar />
          </div>
        </div>
      </div>
    </div>
  );
}
